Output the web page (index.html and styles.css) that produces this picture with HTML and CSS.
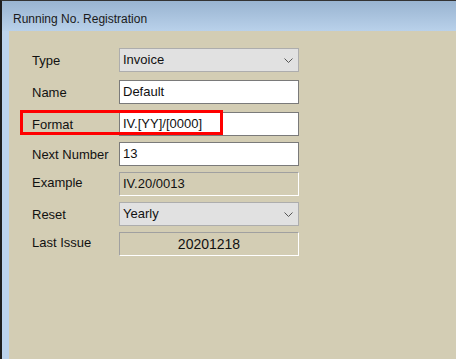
FILE: index.html
```html
<!DOCTYPE html>
<html lang="en">
<head>
    <meta charset="UTF-8">
    <title>Running No. Registration</title>
    <link rel="stylesheet" href="styles.css">
</head>
<body>
    <div class="window">
        <div class="titlebar">Running No. Registration</div>
        <div class="body">
            <div class="frame-left"></div>
            <div class="content">
                <div class="form">
                    <div class="row row-spaced">
                        <div class="label">Type</div>
                        <div class="field select">
                            <span>Invoice</span>
                            <svg class="chevron" width="9" height="5" viewBox="0 0 9 5"><path d="M0.5 0.5 L4.5 4.5 L8.5 0.5" fill="none" stroke="#555" stroke-width="1"/></svg>
                        </div>
                    </div>
                    <div class="row row-spaced">
                        <div class="label">Name</div>
                        <div class="field input">Default</div>
                    </div>
                    <div class="row">
                        <div class="label">Format</div>
                        <div class="field input">IV.[YY]/[0000]</div>
                        <span class="highlight"></span>
                    </div>
                    <div class="row">
                        <div class="label">Next Number</div>
                        <div class="field input">13</div>
                    </div>
                    <div class="row">
                        <div class="label label-up">Example</div>
                        <div class="field readonly">IV.20/0013</div>
                    </div>
                    <div class="row">
                        <div class="label">Reset</div>
                        <div class="field select">
                            <span>Yearly</span>
                            <svg class="chevron" width="9" height="5" viewBox="0 0 9 5"><path d="M0.5 0.5 L4.5 4.5 L8.5 0.5" fill="none" stroke="#555" stroke-width="1"/></svg>
                        </div>
                    </div>
                    <div class="row">
                        <div class="label label-up">Last Issue</div>
                        <div class="field readonly centered">20201218</div>
                    </div>
                </div>
            </div>
        </div>
    </div>
</body>
</html>
```

FILE: styles.css
```css
html, body {
    margin: 0;
    padding: 0;
    height: 100%;
    overflow: hidden;
}

body {
    font-family: "Liberation Sans", Arial, sans-serif;
    color: #111;
}

.window {
    height: 100%;
    display: flex;
    flex-direction: column;
    border-top: 1px solid #333;
    border-left: 2px solid #1e1e1e;
    box-sizing: border-box;
}

.titlebar {
    height: 30px;
    flex: none;
    box-sizing: border-box;
    background: linear-gradient(#99b4d1, #b9d1ea);
    font-size: 12px;
    line-height: 24px;
    padding: 6px 0 0 11px;
    color: #1a1a1a;
}

.body {
    flex: 1;
    display: flex;
}

.frame-left {
    width: 7px;
    background-color: #bcd3ec;
}

.content {
    flex: 1;
    background-color: #d3cdb4;
    padding: 17px 0 0 23px;
}

.form {
    display: flex;
    flex-direction: column;
    gap: 6px;
}

.row {
    position: relative;
    display: flex;
    align-items: center;
    height: 24px;
}

.row-spaced {
    margin-bottom: 2px;
}

.label {
    width: 87px;
    font-size: 13px;
}

.label-up {
    margin-top: -4px;
}

.field {
    width: 180px;
    height: 24px;
    box-sizing: border-box;
    font-size: 13px;
    line-height: 22px;
    padding-left: 3px;
}

.select {
    display: flex;
    align-items: center;
    justify-content: space-between;
    background-color: #e1e1e1;
    border: 1px solid #adadad;
    padding-right: 5px;
}

.input {
    background-color: #fff;
    border: 1px solid #7a7a7a;
}

.readonly {
    border: 1px solid #fff;
    border-top-color: #a0a0a0;
    border-left-color: #a0a0a0;
}

.centered {
    text-align: center;
    padding-left: 0;
    font-size: 14px;
}

.highlight {
    position: absolute;
    left: -12px;
    top: -2px;
    width: 203px;
    height: 25px;
    box-sizing: border-box;
    border: 3px solid #f00;
}
```
